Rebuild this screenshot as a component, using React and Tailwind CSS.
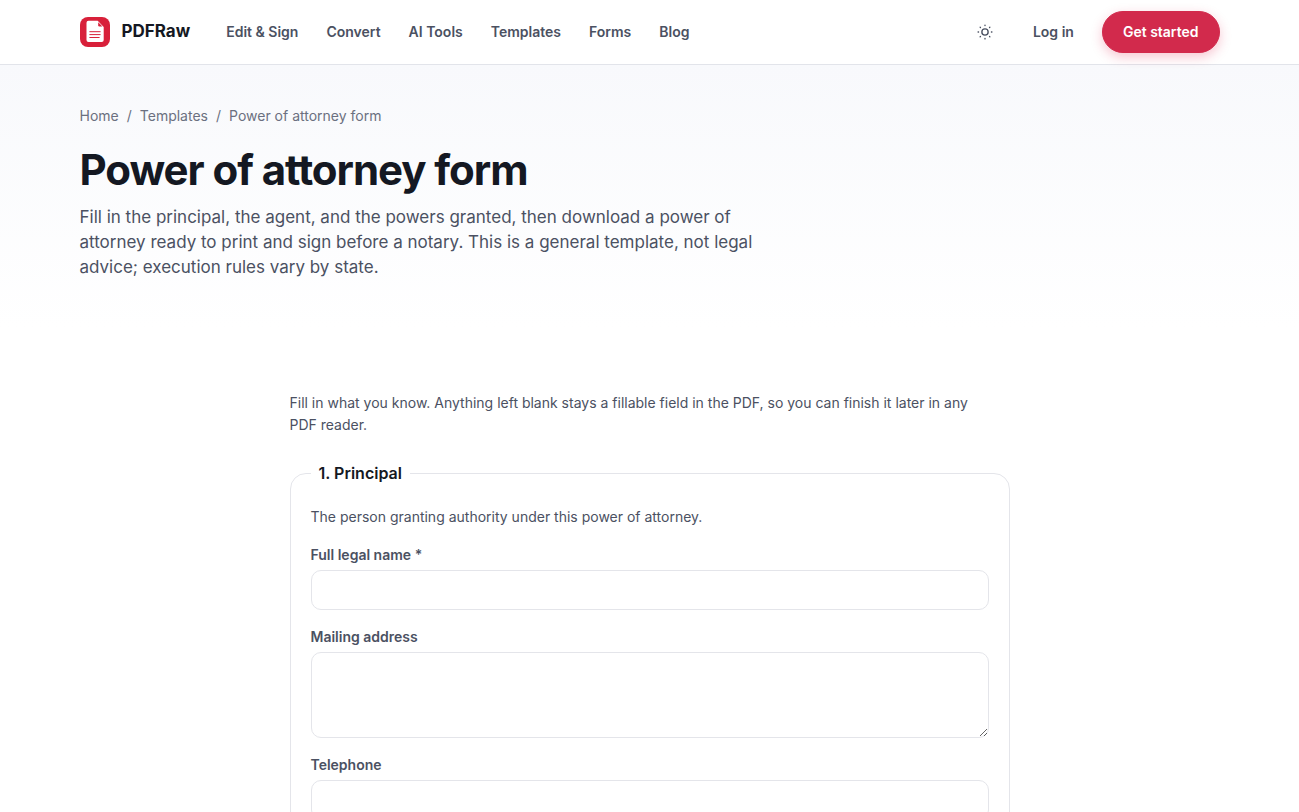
import { useState } from "react"

const navLinks = ["Edit & Sign", "Convert", "AI Tools", "Templates", "Forms", "Blog"]

const Logo = () => (
    <svg width="30" height="30" viewBox="0 0 30 30" aria-hidden="true">
        <rect width="30" height="30" rx="8" fill="#d8203a" />
        <path d="M8.5 3.8h9.2l6 6.2v13a2 2 0 0 1-2 2H8.5a2 2 0 0 1-2-2V5.8a2 2 0 0 1 2-2z" fill="#fff" />
        <path d="M18.2 5.2v3a1.2 1.2 0 0 0 1.2 1.2h3z" fill="#d8203a" />
        <path d="M9.8 14.7h10.4M9.8 17.6h10.4M9.8 20.5h9.4" stroke="#d8203a" strokeWidth="1" strokeLinecap="round" />
    </svg>
)

const SunIcon = () => (
    <svg width="18" height="18" viewBox="0 0 24 24" fill="none" stroke="currentColor" strokeWidth="1.8" strokeLinecap="round" aria-hidden="true">
        <circle cx="12" cy="12" r="4.2" />
        <path d="M12 2.8v.6M12 20.6v.6M2.8 12h.6M20.6 12h.6M5.5 5.5l.4.4M18.1 18.1l.4.4M5.5 18.5l.4-.4M18.1 5.9l.4-.4" />
    </svg>
)

const Header = () => (
    <header className="border-b border-[#e2e4ea] bg-white">
        <div className="mx-auto flex h-16 max-w-[1180px] items-center justify-between px-5">
            <div className="flex items-center gap-9">
                <a href="#" className="flex items-center gap-3 text-[17px] font-bold text-[#141822]">
                    <Logo />
                    PDFRaw
                </a>
                <nav className="flex items-center gap-7 text-sm font-semibold">
                    {navLinks.map((link) => (
                        <a key={link} href="#">{link}</a>
                    ))}
                </nav>
            </div>
            <div className="flex items-center text-sm font-semibold">
                <button type="button" aria-label="Toggle theme" className="mr-7 flex size-10 items-center justify-center">
                    <SunIcon />
                </button>
                <a href="#" className="mr-7">Log in</a>
                <button type="button" className="h-[42px] rounded-full border border-[#d22a4c] bg-[#d22a4c] px-5 text-white shadow-[0_4px_12px_rgba(225,29,72,0.25)]">
                    Get started
                </button>
            </div>
        </div>
    </header>
)

const Hero = () => (
    <section className="bg-linear-to-b from-[#f8f9fc] to-white">
        <div className="mx-auto max-w-[1180px] px-5 pt-10 pb-12">
            <nav aria-label="Breadcrumb" className="flex gap-2 text-sm leading-[22px] text-[#6b7080]">
                <a href="#">Home</a>
                <span>/</span>
                <a href="#">Templates</a>
                <span>/</span>
                <span>Power of attorney form</span>
            </nav>
            <h1 className="mt-5 text-[42px] leading-[46px] font-bold tracking-tight text-[#141822]">
                Power of attorney form
            </h1>
            <p className="mt-3 max-w-[680px] text-[17px] leading-[25px]">
                Fill in the principal, the agent, and the powers granted, then download a power of
                attorney ready to print and sign before a notary. This is a general template, not legal
                advice; execution rules vary by state.
            </p>
        </div>
    </section>
)

const inputStyle = "block w-full rounded-[10px] border border-[#e4e5ea] bg-white px-3 text-base text-[#141822]"

const Field = ({ id, label, value, onChange, multiline }) => (
    <div>
        <label htmlFor={id} className="mb-1 block text-sm leading-[22px] font-semibold">{label}</label>
        {multiline ? (
            <textarea id={id} value={value} onChange={onChange} className={`${inputStyle} h-[86px] resize-y py-2`} />
        ) : (
            <input id={id} type="text" value={value} onChange={onChange} className={`${inputStyle} h-10`} />
        )}
    </div>
)

const App = () => {
    const [form, setForm] = useState({ name: "", address: "", phone: "" })

    const update = (key) => (e) => setForm({ ...form, [key]: e.target.value })

    return (
        <div className="min-h-screen bg-white font-['Inter',sans-serif] text-[#4b5162]">
            <Header />
            <main>
                <Hero />
                <form className="mx-auto mt-16 max-w-[760px] px-5">
                    <p className="max-w-[680px] text-sm leading-[22px]">
                        Fill in what you know. Anything left blank stays a fillable field in the PDF, so you can finish it later in any PDF reader.
                    </p>
                    <fieldset className="mt-6 rounded-2xl border border-[#e4e5ea] px-5 pb-5">
                        <legend className="px-2 text-base leading-[26px] font-semibold text-[#141822]">1. Principal</legend>
                        <p className="mt-5 mb-4 text-sm leading-[22px]">
                            The person granting authority under this power of attorney.
                        </p>
                        <div className="flex flex-col gap-4">
                            <Field id="name" label="Full legal name *" value={form.name} onChange={update("name")} />
                            <Field id="address" label="Mailing address" value={form.address} onChange={update("address")} multiline />
                            <Field id="phone" label="Telephone" value={form.phone} onChange={update("phone")} />
                        </div>
                    </fieldset>
                </form>
            </main>
        </div>
    )
}

export default App
